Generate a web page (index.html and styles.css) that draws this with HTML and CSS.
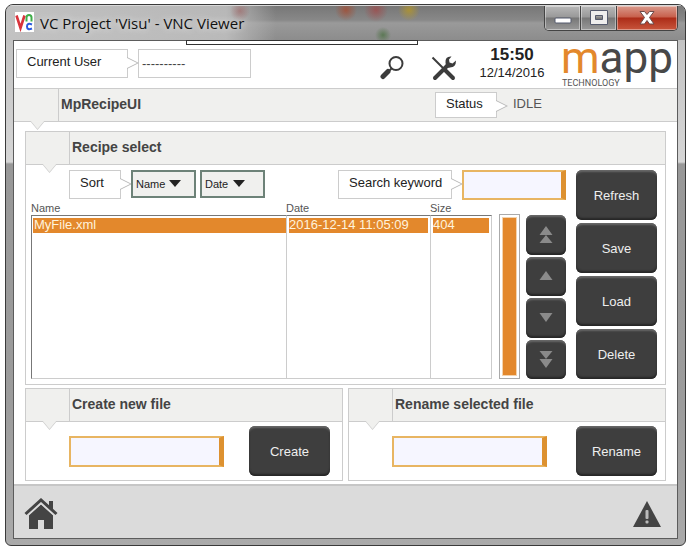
FILE: index.html
```html
<!DOCTYPE html>
<html lang="en">
<head>
    <meta charset="UTF-8">
    <meta name="viewport" content="width=device-width, initial-scale=1.0">
    <title>VC Project 'Visu' - VNC Viewer</title>
    <link rel="stylesheet" href="styles.css">
</head>
<body>
    <div class="window">
        <header class="titlebar">
            <svg class="app-icon" viewBox="0 0 19 20" aria-hidden="true">
                <rect width="19" height="20" fill="#fff"/>
                <path d="M1.5 3.5 L5.5 16 L9.5 3.5" fill="none" stroke="#d8343c" stroke-width="2.6"/>
                <path d="M11.5 9.500V5.500Q11.500 3 14 3T16.500 5.500V9.500" fill="none" stroke="#3fae49" stroke-width="2"/>
                <path d="M17 12.500Q12 10.500 12 14.500T17 16.500" fill="none" stroke="#2d5be0" stroke-width="2"/>
            </svg>
            <h1>VC Project 'Visu' - VNC Viewer</h1>
            <div class="window-buttons">
                <button class="win-btn" aria-label="Minimize">
                    <svg width="20" height="18" viewBox="0 0 20 18"><rect x="2" y="9" width="16" height="5" rx="1" fill="#fff" stroke="#555b6e"/></svg>
                </button>
                <button class="win-btn" aria-label="Maximize">
                    <svg width="20" height="18" viewBox="0 0 20 18"><path fill-rule="evenodd" d="M1.500 1.500h17v14h-17zM6.500 6.500h7v4h-7z" fill="#eee" stroke="#555b6e"/></svg>
                </button>
                <button class="win-btn close" aria-label="Close">
                    <svg width="20" height="18" viewBox="0 0 20 18"><path d="M3 2.500h4.500L10 5.500l2.500-3H17L12.500 8.500 17 15h-4.500L10 11.500 7.500 15H3l4.500-6.500z" fill="#fff" stroke="#6b4a4a"/></svg>
                </button>
            </div>
        </header>

        <main class="screen">
            <div class="toolbar-handle"></div>

            <div class="top">
                <span class="tag">Current User</span>
                <span class="user">----------</span>
                <div class="tools">
                    <button class="icon-btn" aria-label="Search">
                        <svg width="26" height="26" viewBox="0 0 26 26"><circle cx="16" cy="8.500" r="6.500" fill="none" stroke="#3c3c3c" stroke-width="2"/><path d="M11.500 13.500l-2 2" stroke="#3c3c3c" stroke-width="2"/><path d="M8 16.500L3 21.500" stroke="#3c3c3c" stroke-width="5" stroke-linecap="round"/></svg>
                    </button>
                    <button class="icon-btn" aria-label="Settings">
                        <svg width="26" height="26" viewBox="0 0 26 26"><path d="M1.500 2.500L13 14" stroke="#3c3c3c" stroke-width="2"/><path d="M14 15l8 8" stroke="#3c3c3c" stroke-width="4" stroke-linecap="round"/><path d="M4 23L17 10" stroke="#3c3c3c" stroke-width="4" stroke-linecap="round"/><path d="M20.500 1.500Q14 1 14.500 7.500T19 12.500Q25 12.500 25 5.500L21.500 8.500 18.500 7.500 18 4.500z" fill="#3c3c3c"/></svg>
                    </button>
                </div>
                <div class="clock">
                    <b>15:50</b>
                    <span>12/14/2016</span>
                </div>
                <svg class="logo" viewBox="0 0 114 48" role="img" aria-label="mapp technology">
                    <text class="logo-name" x="0" y="32"><tspan class="logo-m">m</tspan>app</text>
                    <text class="logo-sub" x="1" y="45">TECHNOLOGY</text>
                </svg>
            </div>

            <div class="bar page-bar">
                <h2>MpRecipeUI</h2>
                <span class="tag status-tag">Status</span>
                <span class="status">IDLE</span>
            </div>

            <div class="content">
                <section class="panel recipe">
                    <div class="bar"><h2>Recipe select</h2></div>
                    <div class="recipe-body">
                        <div class="recipe-main">
                            <div class="filters">
                                <span class="tag">Sort</span>
                                <div class="dropdown">
                                    <select aria-label="Sort by"><option>Name</option></select>
                                </div>
                                <div class="dropdown">
                                    <select aria-label="Then sort by"><option>Date</option></select>
                                </div>
                                <label class="tag search-tag" for="keyword">Search keyword</label>
                                <input class="field" type="text" id="keyword">
                            </div>
                            <div class="list">
                                <table class="files">
                                    <thead>
                                        <tr><th>Name</th><th class="col-date">Date</th><th class="col-size">Size</th></tr>
                                    </thead>
                                    <tbody>
                                        <tr class="selected">
                                            <td><div>MyFile.xml</div></td>
                                            <td><div>2016-12-14 11:05:09</div></td>
                                            <td><div>404</div></td>
                                        </tr>
                                        <tr class="rest"><td></td><td></td><td></td></tr>
                                    </tbody>
                                </table>
                                <div class="scrollbar"><div class="thumb"></div></div>
                                <div class="arrows">
                                    <button class="dark" aria-label="First"><svg width="14" height="18" viewBox="0 0 14 18"><path d="M7 0l6.500 9h-13zM7 9l6.500 8h-13z"/></svg></button>
                                    <button class="dark" aria-label="Up"><svg width="14" height="18" viewBox="0 0 14 18"><path d="M7 4l6.500 9h-13z"/></svg></button>
                                    <button class="dark" aria-label="Down"><svg width="14" height="18" viewBox="0 0 14 18"><path d="M7 13l6.500-9h-13z"/></svg></button>
                                    <button class="dark" aria-label="Last"><svg width="14" height="18" viewBox="0 0 14 18"><path d="M7 9l6.500-8h-13zM7 18l6.500-9h-13z"/></svg></button>
                                </div>
                            </div>
                        </div>
                        <div class="actions">
                            <button class="dark">Refresh</button>
                            <button class="dark">Save</button>
                            <button class="dark">Load</button>
                            <button class="dark">Delete</button>
                        </div>
                    </div>
                </section>

                <section class="panel">
                    <div class="bar"><h2><label for="new-name">Create new file</label></h2></div>
                    <div class="file-form">
                        <input class="field" type="text" id="new-name">
                        <button class="dark">Create</button>
                    </div>
                </section>

                <section class="panel">
                    <div class="bar"><h2><label for="rename">Rename selected file</label></h2></div>
                    <div class="file-form">
                        <input class="field" type="text" id="rename">
                        <button class="dark">Rename</button>
                    </div>
                </section>
            </div>

            <footer class="bottom">
                <button class="icon-btn" aria-label="Home">
                    <svg width="34" height="32" viewBox="0 0 34 32"><path d="M5 16L17 5l12 11V31h-9v-9h-6v9H5z" fill="#444"/><path d="M2.500 17L17 4 31.500 17" fill="none" stroke="#dbdbdb" stroke-width="4"/><path d="M5 18L17 7l12 11V31h-9v-9h-6v9H5z" fill="#444"/><path d="M1.500 16L17 2l15.500 14" fill="none" stroke="#444" stroke-width="3"/><path d="M25 3h4v10l-4-4z" fill="#444"/></svg>
                </button>
                <button class="icon-btn" aria-label="Alarms">
                    <svg width="30" height="28" viewBox="0 0 30 28"><path d="M15 1l14 26H1z" fill="#444"/><rect x="13.500" y="10" width="3" height="9" rx="1" fill="#bbb"/><rect x="13.500" y="20.500" width="3" height="3" rx="1" fill="#bbb"/></svg>
                </button>
            </footer>
        </main>
    </div>
</body>
</html>
```

FILE: styles.css
```css
* {
    box-sizing: border-box;
}
body {
    margin: 0;
    background: #fff;
    font-family: "Liberation Sans", Arial, sans-serif;
    font-size: 13px;
    color: #222;
}
h1, h2 {
    margin: 0;
}
button, input, select {
    font-family: inherit;
    font-size: 13px;
    margin: 0;
}

/* window frame */
.window {
    margin: 4px 5px 7px;
    padding: 0 7px 6px;
    border: 1px solid #3a3a3a;
    border-radius: 8px 8px 6px 6px;
    background: linear-gradient(#b4b4b4 0, #c4c4c4 40px, #d6d6d6 157px, #989898 159px, #9c9c9c 400px, #aaa 100%);
    overflow: hidden;
}
.titlebar {
    display: flex;
    align-items: flex-start;
    height: 35px;
    margin: 0 -7px;
    padding: 0 7px;
    border-top: 1px solid #d8d8d8;
    background:
        radial-gradient(circle at 234px 5px, rgba(150, 60, 60, 0.4), transparent 10px),
        radial-gradient(circle at 340px 4px, rgba(170, 70, 40, 0.7), transparent 11px),
        radial-gradient(circle at 370px 4px, rgba(170, 60, 60, 0.6), transparent 12px),
        radial-gradient(circle at 403px 4px, rgba(180, 150, 40, 0.8), transparent 11px),
        radial-gradient(circle at 377px 29px, rgba(70, 110, 60, 0.7), transparent 8px),
        linear-gradient(90deg, rgba(200, 200, 200, 0.9) 0, rgba(190, 190, 190, 0.9) 220px, transparent 270px),
        linear-gradient(#777 0, #888 14px, #9a9a9a 17px, #8c8c8c 100%);
}
.app-icon {
    width: 19px;
    height: 20px;
    margin: 6px 6px 0 2px;
}
.titlebar h1 {
    flex: 1;
    font: 15px/20px "Open Sans", "Noto Sans", sans-serif;
    padding-top: 7px;
    color: #111;
    text-shadow: 0 0 6px #eee;
}
.window-buttons {
    display: flex;
    border: 1px solid #444;
    border-top: 0;
    border-radius: 0 0 5px 5px;
    overflow: hidden;
}
.win-btn {
    width: 36px;
    height: 24px;
    padding: 0;
    border: 0;
    border-right: 1px solid #444;
    background: linear-gradient(#b8b8b8 0, #999 11px, #777 12px, #999 100%);
    box-shadow: inset 0 0 0 1px rgba(255, 255, 255, 0.4);
}
.win-btn svg {
    display: block;
    margin: auto;
}
.close {
    width: 60px;
    border-right: 0;
    background: linear-gradient(#d99a8c 0, #c8604c 11px, #ac2c18 12px, #c8553c 100%);
}

/* panel screen */
.screen {
    position: relative;
    border: 1px solid #5c5c5c;
    background: #fff;
}
.toolbar-handle {
    position: absolute;
    top: -1px;
    left: 26%;
    right: 39%;
    height: 5px;
    border: 1px solid #333;
    background: #fff;
}
.top {
    display: flex;
    align-items: flex-start;
    height: 47px;
    padding: 8px 2px 0;
}
.tag {
    position: relative;
    height: 29px;
    margin-right: 10px;
    padding: 0 10px;
    border: 1px solid #ccc;
    background: #fff;
    line-height: 24px;
    white-space: nowrap;
}
.tag::before, .tag::after {
    content: "";
    position: absolute;
    top: 7px;
    right: -12px;
    width: 12px;
    height: 12px;
    background: #bbb;
    clip-path: polygon(0 0, 100% 50%, 0 100%);
}
.tag::after {
    right: -10px;
    background: #fff;
}
.top .tag {
    width: 112px;
}
.user {
    width: 113px;
    height: 29px;
    border: 1px solid #ccc;
    padding-left: 3px;
    line-height: 27px;
    color: #444;
}
.tools {
    flex: 1;
    display: flex;
    justify-content: flex-end;
    gap: 25px;
    padding: 6px 6px 0 0;
}
.icon-btn {
    display: block;
    padding: 0;
    border: 0;
    background: none;
}
.icon-btn svg {
    display: block;
}
.clock {
    width: 98px;
    text-align: center;
    line-height: 16px;
}
.clock b {
    display: block;
    margin-top: -4px;
    font-size: 17px;
    line-height: 20px;
}
.logo {
    width: 114px;
    height: 48px;
    margin-top: -8px;
    overflow: visible;
}
.logo-name {
    font: 44px Roboto, "Liberation Sans", sans-serif;
    fill: #484848;
}
.logo-m {
    fill: #e3882c;
}
.logo-sub {
    font: 9px Roboto, "Liberation Sans", sans-serif;
    fill: #555;
}

/* grey headings with the small pointer below */
.bar {
    position: relative;
    display: flex;
    height: 33px;
    border-bottom: 1px solid #ccc;
    background: #f0f0ee;
}
.bar h2 {
    flex: 1;
    margin-left: 43px;
    padding-left: 2px;
    border-left: 1px solid #ccc;
    font-size: 14px;
    line-height: 30px;
    color: #444;
}
.bar::before, .bar::after {
    content: "";
    position: absolute;
    left: 16px;
    bottom: -9px;
    width: 15px;
    height: 9px;
    background: #ccc;
    clip-path: polygon(0 0, 100% 0, 50% 100%);
}
.bar::after {
    bottom: -8px;
    background: #f0f0ee;
}
.page-bar {
    height: 34px;
    border-top: 1px solid #ccc;
}
.page-bar h2 {
    margin-left: 44px;
}
.status-tag {
    width: 62px;
    height: 26px;
    margin-top: 3px;
    line-height: 22px;
}
.status {
    width: 170px;
    padding-left: 6px;
    line-height: 30px;
    color: #555;
}

.content {
    display: grid;
    grid-template-columns: 1fr 1fr;
    gap: 3px 5px;
    padding: 9px 11px 3px;
}
.panel {
    border: 1px solid #ccc;
}
.recipe {
    grid-column: 1 / 3;
}
.recipe-body {
    display: flex;
    gap: 10px;
    padding: 5px 8px 5px 5px;
}
.recipe-main {
    flex: 1;
    display: flex;
    flex-direction: column;
}
.filters {
    display: flex;
    padding-left: 38px;
}
.filters .tag {
    width: 52px;
}
.filters .search-tag {
    width: 114px;
    margin-left: auto;
}
.dropdown {
    position: relative;
    width: 65px;
    height: 28px;
    margin-right: 4px;
}
.dropdown select {
    width: 100%;
    height: 100%;
    padding: 0 3px;
    border: 2px solid #6d8278;
    border-radius: 0;
    background: #f0f0ee;
    color: #222;
    font-size: 11px;
    appearance: none;
}
.dropdown::after {
    content: "";
    position: absolute;
    top: 10px;
    right: 15px;
    width: 12px;
    height: 7px;
    background: #222;
    clip-path: polygon(0 0, 100% 0, 50% 100%);
    pointer-events: none;
}
.dropdown:nth-child(3)::after {
    right: 20px;
}
.field {
    width: 104px;
    height: 30px;
    padding: 0 4px;
    border: 2px solid #e8b562;
    border-right: 5px solid #dd9130;
    border-radius: 0;
    background: #f6f6ff;
}

.list {
    flex: 1;
    display: flex;
    margin-top: 1px;
}
.files {
    flex: 1;
    border-spacing: 0;
    table-layout: fixed;
    height: 178px;
}
.files th {
    height: 14px;
    padding: 0;
    font-size: 11px;
    font-weight: normal;
    line-height: 14px;
    text-align: left;
    color: #555;
}
.col-date {
    width: 144px;
}
.col-size {
    width: 62px;
}
.files td {
    padding: 0 2px;
    border-left: 1px solid #ccc;
}
.files td:first-child {
    border-left-color: #777;
}
.files td:last-child {
    border-right: 1px solid #ccc;
}
.selected td {
    height: 18px;
    padding-top: 2px;
    border-top: 1px solid #777;
}
.selected div {
    height: 15px;
    background: #e3882c;
    color: #fff3dc;
    font-size: 13px;
    line-height: 14px;
}
.selected td:first-child div {
    padding-left: 1px;
    margin: 0 -2px 0 -1px;
}
.rest td {
    border-bottom: 1px solid #ccc;
}
.scrollbar {
    width: 21px;
    margin: 13px 0 0 7px;
    padding: 2px;
    border: 1px solid #aaa;
}
.thumb {
    height: 100%;
    border: 1px solid #f3d3ae;
    background: #e3882c;
}
.arrows {
    display: grid;
    gap: 2px;
    width: 40px;
    margin: 14px 0 0 6px;
}
.arrows svg {
    display: block;
    margin: auto;
    fill: #8a8a8a;
}
.dark {
    padding: 0;
    border: 0;
    border-radius: 6px;
    background: #3e3e3e;
    box-shadow: inset 0 3px 2px -1px #686868, inset 0 -2px 2px #262626;
    color: #eee;
}
.actions {
    display: grid;
    gap: 3px;
    width: 81px;
}
.file-form {
    display: flex;
    align-items: center;
    justify-content: space-between;
    padding: 4px 12px 4px 43px;
}
.file-form .field {
    width: 155px;
    height: 31px;
}
.file-form .dark {
    width: 81px;
    height: 50px;
}
.panel:last-child .file-form {
    padding-right: 8px;
}

.bottom {
    display: flex;
    align-items: center;
    justify-content: space-between;
    height: 54px;
    padding: 4px 15px 0 10px;
    border-top: 2px solid #c6c6c6;
    background: #dbdbdb;
}
```
